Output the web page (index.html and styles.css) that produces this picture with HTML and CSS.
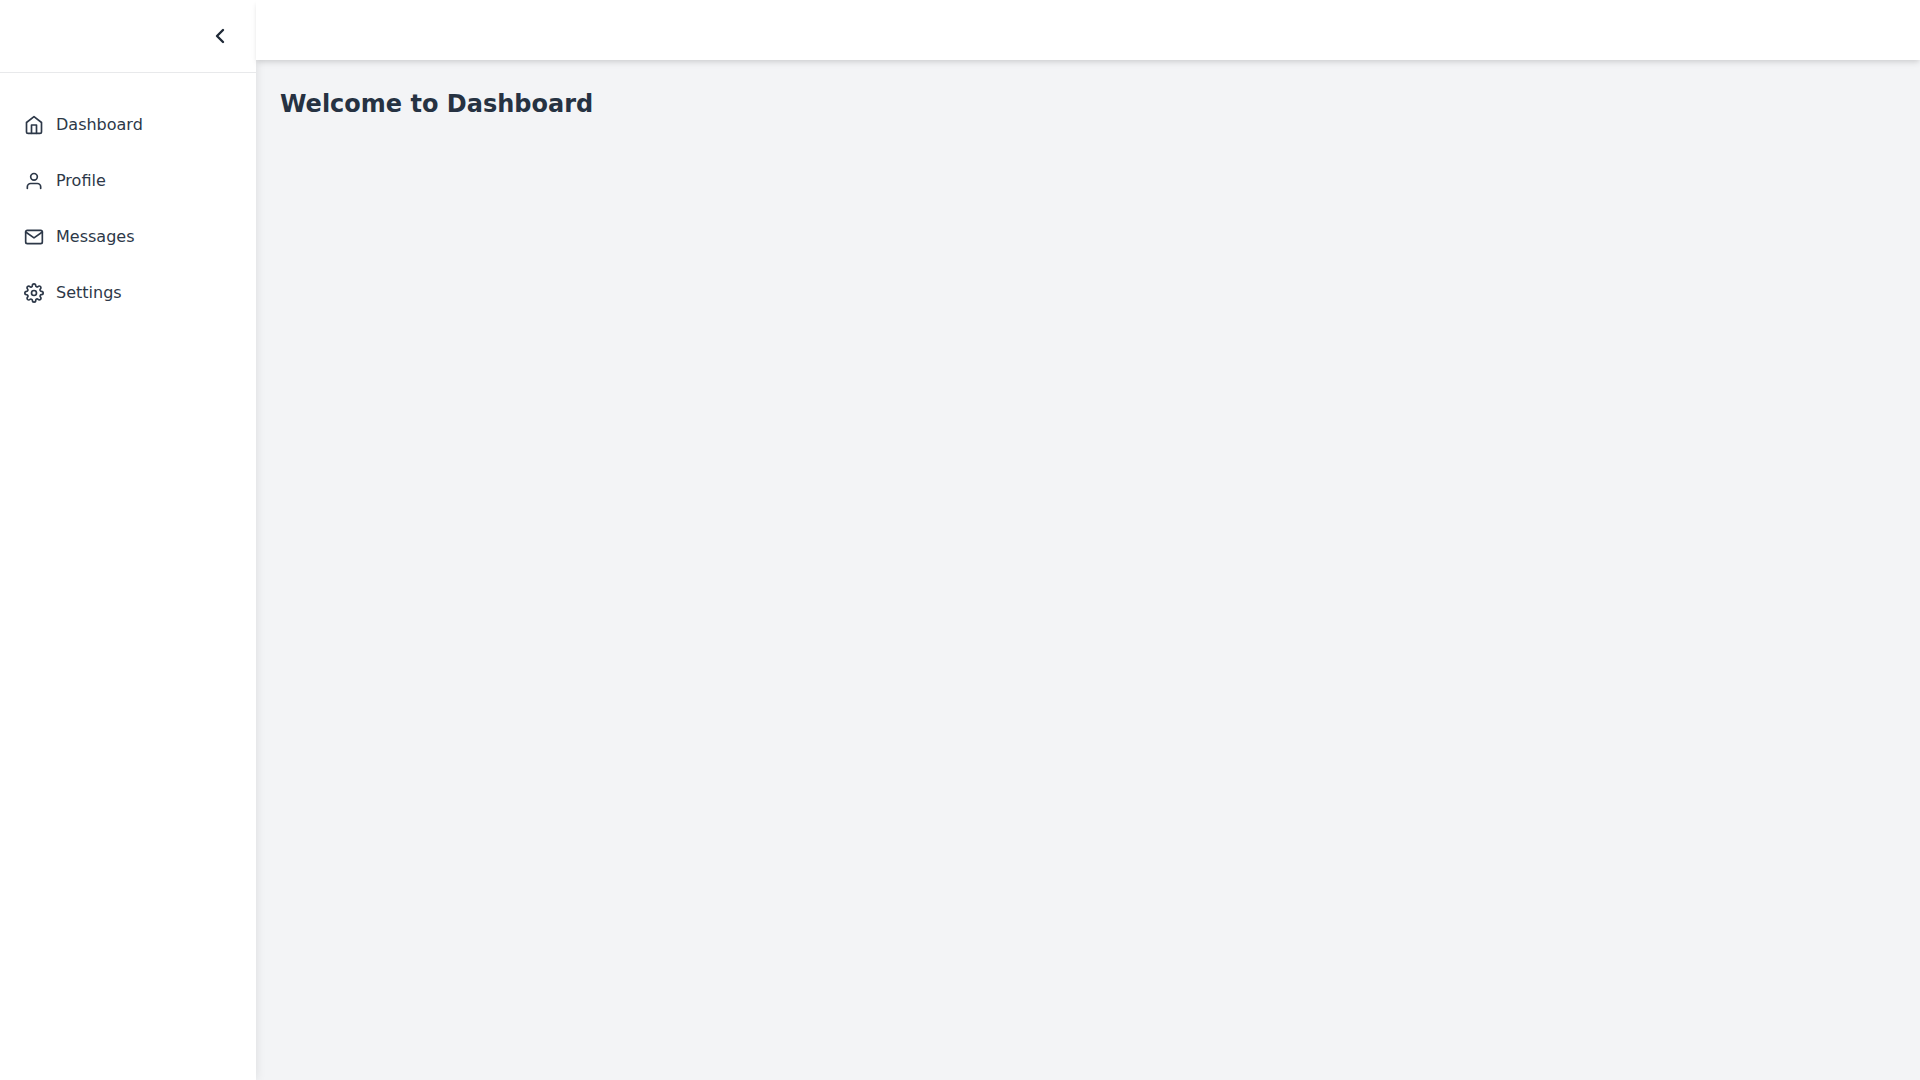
FILE: index.html
```html
<!DOCTYPE html>
<html lang="en">
<head>
    <meta charset="UTF-8">
    <meta name="viewport" content="width=device-width, initial-scale=1.0">
    <title>Dashboard</title>
    <link rel="stylesheet" href="styles.css">
</head>
<body>
    <div class="layout">
        <aside class="sidebar" id="sidebar">
            <div class="sidebar-header">
                <button type="button" class="toggle-btn" aria-label="Toggle sidebar" aria-controls="sidebar">
                    <svg class="icon-lg" viewBox="0 0 24 24"><polyline points="15 18 9 12 15 6"></polyline></svg>
                </button>
            </div>
            <nav class="menu">
                <a href="#dashboard">
                    <svg class="icon" viewBox="0 0 24 24"><path d="M3 9l9-7 9 7v11a2 2 0 0 1-2 2H5a2 2 0 0 1-2-2z"></path><polyline points="9 22 9 12 15 12 15 22"></polyline></svg>
                    <span>Dashboard</span>
                </a>
                <a href="#profile">
                    <svg class="icon" viewBox="0 0 24 24"><path d="M20 21v-2a4 4 0 0 0-4-4H8a4 4 0 0 0-4 4v2"></path><circle cx="12" cy="7" r="4"></circle></svg>
                    <span>Profile</span>
                </a>
                <a href="#messages">
                    <svg class="icon" viewBox="0 0 24 24"><path d="M4 4h16c1.1 0 2 .9 2 2v12c0 1.1-.9 2-2 2H4c-1.1 0-2-.9-2-2V6c0-1.1.9-2 2-2z"></path><polyline points="22,6 12,13 2,6"></polyline></svg>
                    <span>Messages</span>
                </a>
                <a href="#settings">
                    <svg class="icon" viewBox="0 0 24 24"><circle cx="12" cy="12" r="3"></circle><path d="M19.4 15a1.65 1.65 0 0 0 .33 1.82l.06.06a2 2 0 0 1 0 2.83 2 2 0 0 1-2.83 0l-.06-.06a1.65 1.65 0 0 0-1.82-.33 1.65 1.65 0 0 0-1 1.51V21a2 2 0 0 1-2 2 2 2 0 0 1-2-2v-.09A1.65 1.65 0 0 0 9 19.4a1.65 1.65 0 0 0-1.82.33l-.06.06a2 2 0 0 1-2.83 0 2 2 0 0 1 0-2.83l.06-.06a1.65 1.65 0 0 0 .33-1.82 1.65 1.65 0 0 0-1.51-1H3a2 2 0 0 1-2-2 2 2 0 0 1 2-2h.09A1.65 1.65 0 0 0 4.6 9a1.65 1.65 0 0 0-.33-1.82l-.06-.06a2 2 0 0 1 0-2.83 2 2 0 0 1 2.83 0l.06.06a1.65 1.65 0 0 0 1.82.33H9a1.65 1.65 0 0 0 1-1.51V3a2 2 0 0 1 2-2 2 2 0 0 1 2 2v.09a1.65 1.65 0 0 0 1 1.51 1.65 1.65 0 0 0 1.82-.33l.06-.06a2 2 0 0 1 2.83 0 2 2 0 0 1 0 2.83l-.06.06a1.65 1.65 0 0 0-.33 1.82V9a1.65 1.65 0 0 0 1.51 1H21a2 2 0 0 1 2 2 2 2 0 0 1-2 2h-.09a1.65 1.65 0 0 0-1.51 1z"></path></svg>
                    <span>Settings</span>
                </a>
            </nav>
        </aside>

        <div class="content">
            <header class="topbar"></header>
            <main class="main">
                <h1>Welcome to Dashboard</h1>
            </main>
        </div>
    </div>
</body>
</html>
```

FILE: styles.css
```css
* {
    box-sizing: border-box;
}

body {
    margin: 0;
    font-family: "DejaVu Sans", sans-serif;
    font-size: 16px;
    line-height: 24px;
    color: #263242;
    background-color: #f3f4f6;
}

.layout {
    display: flex;
    min-height: 100vh;
}

/* Sidebar */
.sidebar {
    position: relative;
    flex: none;
    width: 256px;
    background-color: white;
    box-shadow: 0 0 10px rgba(0, 0, 0, 0.1);
}

.sidebar-header {
    display: flex;
    justify-content: flex-end;
    padding: 16px;
    border-bottom: 1px solid #e8e9eb;
}

.toggle-btn {
    display: flex;
    padding: 8px;
    border: none;
    border-radius: 8px;
    background: none;
    color: #1f2937;
    cursor: pointer;
}

.toggle-btn:hover {
    background-color: #f3f4f6;
}

.icon,
.icon-lg {
    flex: none;
    fill: none;
    stroke: currentColor;
    stroke-width: 2;
    stroke-linecap: round;
    stroke-linejoin: round;
}

.icon {
    width: 20px;
    height: 20px;
}

.icon-lg {
    width: 24px;
    height: 24px;
    stroke-width: 2.4;
}

.menu {
    padding-top: 24px;
}

.menu a {
    display: flex;
    align-items: center;
    gap: 12px;
    padding: 16px 24px;
    color: #2d3848;
    text-decoration: none;
}

.menu a:hover {
    background-color: #f3f4f6;
}

/* Content */
.content {
    flex: 1;
    min-width: 0;
}

.topbar {
    position: relative;
    height: 60px;
    background-color: white;
    box-shadow: 0 4px 6px -1px rgba(0, 0, 0, 0.1), 0 2px 4px -1px rgba(0, 0, 0, 0.06);
}

.main {
    padding: 24px;
}

h1 {
    margin: 0;
    font-size: 24px;
    line-height: 40px;
}
```
